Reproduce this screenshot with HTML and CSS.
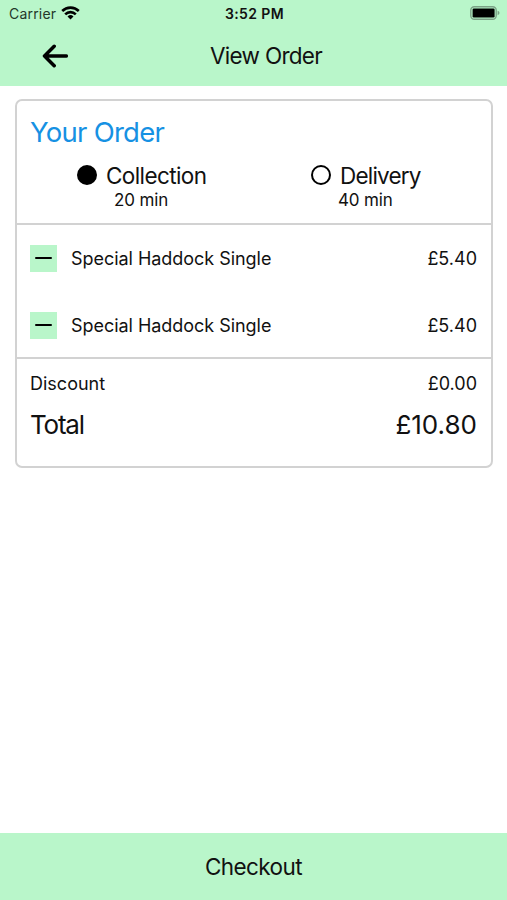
FILE: index.html
```html
<!DOCTYPE html>
<html lang="en">
<head>
<meta charset="utf-8">
<title>View Order</title>
<link rel="stylesheet" href="styles.css">
</head>
<body>
<div class="screen">
  <header class="top">
    <div class="status">
      <div class="carrier"><span class="carrier-name">Carrier</span>
        <svg class="wifi" width="19" height="14" viewBox="0 0 19 14"><g fill="none" stroke="#000" stroke-width="2.600"><path d="M1.200 5a11.800 11.800 0 0 1 16.600 0"/><path d="M4.200 8.300a7.500 7.500 0 0 1 10.600 0"/></g><path d="M9.500 13.500 6.500 10.500a4.300 4.300 0 0 1 6 0z"/></svg>
      </div>
      <span class="clock">3:52 PM</span>
      <svg class="battery" width="30" height="14" viewBox="0 0 30 14"><rect x=".8" y=".8" width="25.400" height="12.400" rx="3.500" fill="none" stroke="#7ba286" stroke-width="1.400"/><rect x="2.600" y="2.500" width="22" height="9" rx="1.300"/><path d="M27.600 4.800q1.900.6 1.900 2.200t-1.900 2.200z" fill="#7ba286"/></svg>
    </div>
    <div class="nav">
      <svg class="back" width="26" height="24" viewBox="0 0 26 24"><path d="M24.300 12H2.500M12.200 2.300 2.500 12l9.700 9.700" fill="none" stroke="#000" stroke-width="3.500" stroke-linecap="round" stroke-linejoin="round"/></svg>
      <h1 class="title">View Order</h1>
    </div>
  </header>
  <main class="content">
    <section class="card">
      <div class="summary">
        <h2 class="heading">Your Order</h2>
        <div class="options">
          <div class="option collection"><i class="radio selected"></i><div><div class="name">Collection</div><div class="time">20 min</div></div></div>
          <div class="option delivery"><i class="radio"></i><div><div class="name">Delivery</div><div class="time">40 min</div></div></div>
        </div>
      </div>
      <div class="items">
        <div class="item"><span class="minus"></span><span class="product">Special Haddock Single</span><span class="price">£5.40</span></div>
        <div class="item"><span class="minus"></span><span class="product">Special Haddock Single</span><span class="price">£5.40</span></div>
      </div>
      <div class="totals">
        <div class="line discount"><span class="label">Discount</span><span class="price">£0.00</span></div>
        <div class="line total"><span class="label">Total</span><span class="price">£10.80</span></div>
      </div>
    </section>
  </main>
  <footer class="checkout"><span>Checkout</span></footer>
</div>
</body>
</html>
```
FILE: styles.css
```css
* { box-sizing: border-box; }
body { margin: 0; font-family: Inter, sans-serif; color: #111; background: #fff; }
.screen { height: 900px; display: flex; flex-direction: column; }
.top { height: 86px; background: #b9f6ca; }
.status { height: 27px; padding: 0 7px 0 9px; display: grid; grid-template-columns: 1fr auto 1fr; align-items: center; font-size: 14px; }
.carrier { display: flex; align-items: center; gap: 5px; }
.carrier-name { letter-spacing: .2px; color: #24382a; }
.wifi { margin-top: -2px; }
.clock { font-weight: 600; letter-spacing: .4px; }
.battery { justify-self: end; margin-top: -1px; }
.nav { height: 58px; display: grid; grid-template-columns: 68px 1fr 68px; align-items: center; }
.back { justify-self: end; }
.title { margin: 0; padding: 0 0 2px 25px; font-size: 22.5px; font-weight: 400; text-align: center; letter-spacing: -.7px; }
.content { flex: 1; padding: 13px 14px 0 15px; }
.card { height: 369px; border: 2px solid #d2d2d2; border-radius: 7px; }
.summary { height: 122px; padding: 13px 13px 0; }
.heading { margin: 0; font-size: 27.5px; line-height: 36px; font-weight: 400; letter-spacing: -.75px; color: #1691e3; }
.options { display: flex; margin-top: 12px; padding-left: 47px; }
.option { display: flex; flex: none; gap: 9px; }
.collection { width: 234px; }
.radio { width: 20px; height: 20px; border: 2px solid #000; border-radius: 50%; margin-top: 3px; }
.selected { background: #000; }
.name { font-size: 22.5px; line-height: 28px; letter-spacing: -.6px; }
.delivery .name { letter-spacing: -.8px; }
.time { font-size: 17px; line-height: 20px; padding-left: 8px; letter-spacing: -.15px; }
.delivery .time { padding-left: 0; margin-left: -2px; }
.items { height: 136px; border-top: 2px solid #d2d2d2; border-bottom: 2px solid #d2d2d2; }
.item { height: 66px; padding: 0 14px 0 13px; display: flex; align-items: center; font-size: 18px; }
.item + .item { height: 68px; }
.minus { width: 27px; height: 27px; background: #b9f6ca; display: grid; place-items: center; margin-right: 14px; }
.minus::before { content: ""; width: 17px; height: 2px; border-radius: 1px; background: #000; }
.price { margin-left: auto; }
.product { letter-spacing: -.04px; }
.totals { padding: 9px 14px 0 13px; }
.line { display: flex; align-items: center; }
.discount { font-size: 18px; height: 30px; }
.total { font-size: 26px; height: 52px; }
.total .label { letter-spacing: -1.2px; }
.checkout { height: 67px; background: #b9f6ca; display: grid; place-items: center; font-size: 22.5px; letter-spacing: -.6px; }
```
